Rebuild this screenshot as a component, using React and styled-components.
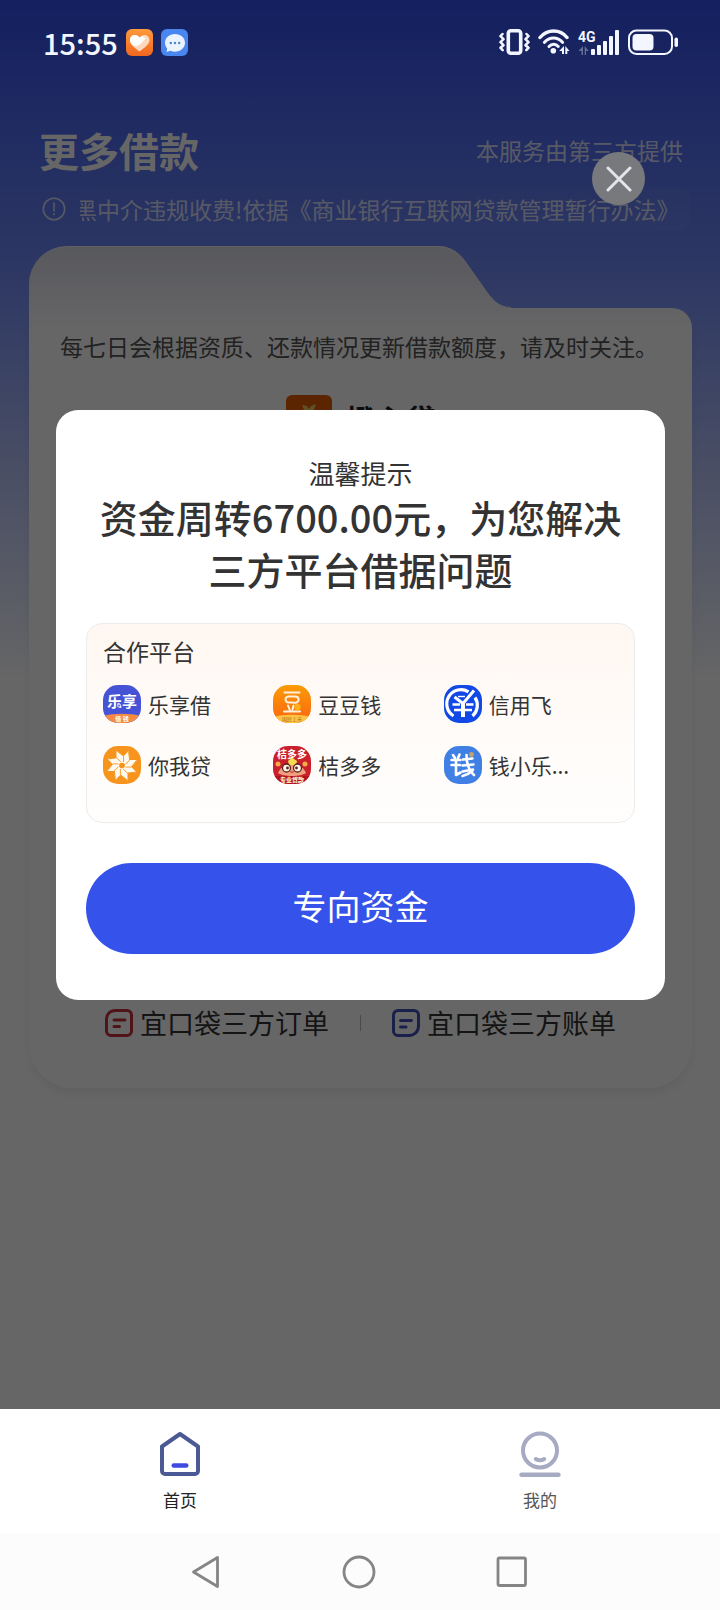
import React from 'react';
import styled, { createGlobalStyle } from 'styled-components';

const GlobalStyle = createGlobalStyle`
  * {
    box-sizing: border-box;
  }

  body {
    margin: 0;
    font-family: "Noto Sans CJK SC", "Noto Sans", sans-serif;
    color: #333333;
  }

  h1, h2, h3, p, ul {
    margin: 0;
    padding: 0;
    font-weight: 400;
  }

  a {
    color: inherit;
    text-decoration: none;
  }

  button {
    font-family: inherit;
    border: none;
    padding: 0;
    cursor: pointer;
  }

  svg {
    display: block;
    flex-shrink: 0;
  }
`;

const Page = styled.div`
  min-height: 100vh;
  display: flex;
  flex-direction: column;
`;

const Screen = styled.main`
  position: relative;
  flex: 1;
  background: linear-gradient(180deg, #3250f0 0, #728bf8 270px, #ffffff 680px);
`;

const StatusBar = styled.header`
  position: relative;
  z-index: 2;
  height: 84px;
  padding: 0 41px 0 43px;
  display: flex;
  align-items: center;
  justify-content: space-between;
  color: #f4f6ff;
`;

const StatusGroup = styled.div`
  display: flex;
  align-items: center;
  gap: 8px;
`;

const Clock = styled.span`
  font-size: 29px;
  line-height: 32px;
  font-weight: 500;
`;

const Heading = styled.div`
  padding: 38px 37px 0 39px;
  display: flex;
  align-items: center;
  justify-content: space-between;
  color: #ffffff;
`;

const PageTitle = styled.h1`
  font-size: 40px;
  line-height: 56px;
  font-weight: 700;
`;

const Provider = styled.p`
  font-size: 23px;
  line-height: 32px;
  color: rgba(255, 255, 255, 0.8);
`;

const Notice = styled.div`
  margin: 9px 30px 0 30px;
  padding: 0 11px 0 12px;
  height: 44px;
  display: flex;
  align-items: center;
  gap: 14px;
  border-radius: 12px;
  background: linear-gradient(90deg, rgba(255, 255, 255, 0), rgba(255, 255, 255, 0.04));
  color: rgba(255, 255, 255, 0.75);
`;

const NoticeText = styled.p`
  flex: 1;
  overflow: hidden;
  white-space: nowrap;
  font-size: 23px;
  line-height: 32px;
  text-indent: -6px;
`;

const Card = styled.section`
  margin: 15px 28px 0 29px;
`;

const CardTop = styled.div`
  display: flex;
`;

const CardTab = styled.div`
  flex: 9;
  height: 62px;
  border-top: 1px solid #f0f1f8;
  border-radius: 38px 0 0 0;
  background: linear-gradient(180deg, #dcdde8, #f6f6fc);
`;

const CardTabSpace = styled.div`
  flex: 4;
`;

const CardBody = styled.div`
  min-height: 780px;
  padding: 22px 31px 47px;
  display: flex;
  flex-direction: column;
  border-radius: 0 20px 44px 44px;
  background: linear-gradient(180deg, #f6f6fc 0, #ffffff 24px);
  box-shadow: 0 6px 10px rgba(0, 0, 0, 0.06);
`;

const CardHint = styled.p`
  font-size: 23px;
  line-height: 32px;
  white-space: nowrap;
  color: #555555;
`;

const Brand = styled.div`
  margin-top: 33px;
  display: flex;
  align-items: center;
  justify-content: center;
  gap: 14px;
`;

const BrandName = styled.h2`
  font-size: 30px;
  line-height: 44px;
  font-weight: 700;
  color: #222222;
`;

const CardLinks = styled.nav`
  margin-top: auto;
  display: flex;
  align-items: center;
  justify-content: center;
  gap: 31px;
`;

const CardLink = styled.a`
  display: flex;
  align-items: center;
  gap: 7px;
  font-size: 27px;
  line-height: 36px;
`;

const LinkDivider = styled.span`
  width: 1px;
  height: 16px;
  background-color: #bbbbbb;
`;

const Overlay = styled.div`
  position: absolute;
  inset: 0;
  z-index: 1;
  padding: 0 55px 0 56px;
  display: flex;
  align-items: center;
  justify-content: center;
  background-color: rgba(0, 0, 0, 0.6);
`;

const CloseButton = styled.button`
  position: absolute;
  top: 152px;
  right: 75px;
  width: 53px;
  height: 53px;
  display: flex;
  align-items: center;
  justify-content: center;
  border-radius: 50%;
  background-color: #78797d;
`;

const Dialog = styled.section`
  width: 100%;
  padding: 45px 30px 46px;
  border-radius: 22px;
  background-color: #ffffff;
`;

const DialogLabel = styled.p`
  font-size: 26px;
  line-height: 36px;
  text-align: center;
`;

const DialogTitle = styled.h2`
  font-size: 38px;
  line-height: 52px;
  font-weight: 500;
  text-align: center;
`;

const Partners = styled.div`
  margin-top: 28px;
  padding: 11px 20px 38px 16px;
  border: 1px solid #ececec;
  border-radius: 16px;
  background: linear-gradient(180deg, #fff7f1 0, #fffbf8 50%, #fffefd 100%);
`;

const PartnersTitle = styled.h3`
  font-size: 23px;
  line-height: 32px;
`;

const PartnerGrid = styled.ul`
  margin-top: 18px;
  display: grid;
  grid-template-columns: repeat(3, 1fr);
  row-gap: 23px;
  list-style: none;
`;

const Partner = styled.li`
  display: flex;
  align-items: center;
  gap: 7px;
  font-size: 21px;
  line-height: 38px;
`;

const PrimaryButton = styled.button`
  margin-top: 40px;
  width: 100%;
  height: 91px;
  padding-bottom: 6px;
  border-radius: 46px;
  background-color: #3552ea;
  color: #ffffff;
  font-size: 34px;
`;

const TabBar = styled.nav`
  height: 124px;
  padding-top: 22px;
  display: flex;
  background-color: #ffffff;
`;

const TabItem = styled.a`
  flex: 1;
  display: flex;
  flex-direction: column;
  align-items: center;
  gap: 11px;
  font-size: 17px;
  line-height: 24px;
  color: ${props => (props.$active ? '#222222' : '#555555')};
`;

const SystemBar = styled.footer`
  height: 77px;
  padding: 0 190px;
  display: flex;
  align-items: center;
  justify-content: space-between;
  background-color: #fcfcfc;
`;

const SystemButton = styled.button`
  background: none;
`;

const HeartAppIcon = () => (
  <svg width="27" height="27" viewBox="0 0 27 27">
    <defs>
      <linearGradient id="heartBg" x1="0" y1="0" x2="0" y2="1">
        <stop offset="0" stopColor="#ff9a3c" />
        <stop offset="1" stopColor="#f2661f" />
      </linearGradient>
    </defs>
    <rect width="27" height="27" rx="6" fill="url(#heartBg)" />
    <path d="M13.5 22.5C8 18.5 4 15 4 11c0-3 2-5 4.700-5 2 0 3.800 1 4.800 2.700C14.500 7 16.300 6 18.300 6 21 6 23.500 8 23.500 11c0 4-4.500 7.500-10 11.500z" fill="#ffd9bd" />
    <path d="M13.500 8.700C12.500 7 10.700 6 8.700 6 6 6 4 8 4 11c0 1.500.6 3 1.700 4.400 3 2.600 6.800 1.600 9.800-1.400l4-4.500c-2-2.500-4.500-2.500-6-.8z" fill="#ffffff" />
  </svg>
);

const ChatAppIcon = () => (
  <svg width="27" height="27" viewBox="0 0 27 27">
    <rect width="27" height="27" rx="6" fill="#4a86f0" />
    <path d="M14 5c5.600 0 10 3.800 10 8.800s-4.400 8.900-10 8.900c-1.700 0-3.300-.4-4.700-1L5.500 23l.7-3.600C4.800 17.900 4 16 4 13.800 4 8.800 8.400 5 14 5z" fill="#eaf3ff" />
    <circle cx="9.800" cy="14" r="1.200" fill="#4a86c8" />
    <circle cx="14" cy="14" r="1.200" fill="#4a86c8" />
    <circle cx="18.200" cy="14" r="1.200" fill="#4a86c8" />
  </svg>
);

const VibrateIcon = () => (
  <svg width="31" height="28" viewBox="0 0 31 28" fill="none" stroke="currentColor" strokeLinejoin="round" strokeLinecap="round">
    <rect x="9.300" y="2.800" width="12.400" height="22.400" rx="2.500" strokeWidth="3.600" />
    <path d="M3.500 6L1.500 8.200l3 3-3 3 3 3-3 2.600 2.200 2.400" strokeWidth="2.500" />
    <path d="M27.500 6l2 2.200-3 3 3 3-3 3 3 2.600-2.200 2.400" strokeWidth="2.500" />
  </svg>
);

const WifiIcon = () => (
  <svg width="32" height="28" viewBox="0 0 32 28" fill="none" stroke="currentColor" strokeLinecap="round">
    <path d="M2 9.500C9.500 .8 22 .8 29 9.500" strokeWidth="3.400" />
    <path d="M6.500 14.200c5-5.600 13-5.600 18 0" strokeWidth="3.200" />
    <path d="M11 18.600c2.700-3 6.700-3 9.300-.2" strokeWidth="3" />
    <circle cx="15.300" cy="22.800" r="2.800" fill="currentColor" stroke="none" />
    <path d="M26 18v8h-2v-3h-2.800zM27.300 18v8h2v-3h2.200z" fill="currentColor" stroke="none" />
  </svg>
);

const SignalIcon = () => (
  <svg width="42" height="28" viewBox="0 0 42 28" fill="currentColor">
    <text x="0" y="14" fontFamily="Roboto, sans-serif" fontSize="14" fontWeight="700">4G</text>
    <path d="M5 18v9H3.500v-4H.5zM6.700 18l4 5H8v4H6.700z" opacity="0.350" />
    <rect x="13" y="21" width="4" height="6" rx="1" />
    <rect x="19" y="17" width="4" height="10" rx="1" />
    <rect x="25" y="13" width="4" height="14" rx="1" />
    <rect x="31" y="8" width="4" height="19" rx="1" />
    <rect x="37" y="2" width="4" height="25" rx="1" />
  </svg>
);

const BatteryIcon = () => (
  <svg width="51" height="28" viewBox="0 0 51 28" fill="none">
    <rect x="1" y="2.500" width="43" height="23.500" rx="7.500" stroke="currentColor" strokeWidth="2" />
    <rect x="4.500" y="6" width="21" height="16.500" rx="4" fill="currentColor" />
    <rect x="46.500" y="9.500" width="3.500" height="9.500" rx="1.700" fill="currentColor" />
  </svg>
);

const AlertIcon = () => (
  <svg width="24" height="24" viewBox="0 0 24 24" fill="none" stroke="currentColor">
    <circle cx="12" cy="12" r="10.700" strokeWidth="1.600" />
    <path d="M12 6v8" strokeWidth="1.600" strokeLinecap="round" />
    <circle cx="12" cy="17.300" r="1" fill="currentColor" stroke="none" />
  </svg>
);

const CardSlope = () => (
  <svg width="74" height="62" viewBox="0 0 74 62">
    <defs>
      <linearGradient id="slopeBg" x1="0" y1="0" x2="0" y2="1">
        <stop offset="0" stopColor="#dcdde8" />
        <stop offset="1" stopColor="#f6f6fc" />
      </linearGradient>
    </defs>
    <path d="M0 0C12 0 21 5 28 15L50 46C57 56 64 62 74 62H0z" fill="url(#slopeBg)" />
    <path d="M0 .5C12 .5 21 5.500 28 15.500L50 46.500C57 56 64 61.500 74 61.500" fill="none" stroke="#f0f1f8" strokeWidth="1" />
  </svg>
);

const BrandIcon = () => (
  <svg width="46" height="46" viewBox="0 0 46 46">
    <rect width="46" height="46" rx="6" fill="#e25c00" />
    <circle cx="23" cy="29" r="13" fill="#ffb84d" />
    <path d="M16 10l5 1 2 3 2-3 5-2-2 6H18z" fill="#f0c860" />
  </svg>
);

const OrderIcon = () => (
  <svg width="28" height="28" viewBox="0 0 28 28" fill="none" stroke="#c8303a" strokeWidth="3" strokeLinecap="round">
    <path d="M10.500 1.500H22a4.500 4.500 0 0 1 4.500 4.500v16a4.500 4.500 0 0 1-4.500 4.500H6A4.500 4.500 0 0 1 1.500 22V11C1.500 5 5 1.500 10.500 1.500z" strokeLinejoin="round" />
    <path d="M9 11h11M9 17.500h5.500" />
  </svg>
);

const BillIcon = () => (
  <svg width="28" height="28" viewBox="0 0 28 28" fill="none" stroke="#4350b8" strokeWidth="3" strokeLinecap="round">
    <path d="M6 1.500h16A4.500 4.500 0 0 1 26.500 6v11c0 5.500-4 9.500-9.500 9.500H6A4.500 4.500 0 0 1 1.500 22V6A4.500 4.500 0 0 1 6 1.500z" strokeLinejoin="round" />
    <path d="M8.500 11.500h11M8.500 18H14" />
  </svg>
);

const CloseIcon = () => (
  <svg width="26" height="26" viewBox="0 0 26 26" fill="none" stroke="#e4e5ea" strokeWidth="3" strokeLinecap="round">
    <path d="M2 2l22 22M24 2L2 24" />
  </svg>
);

const LexiangLogo = () => (
  <svg width="38" height="38" viewBox="0 0 38 38">
    <defs>
      <clipPath id="lexiangClip">
        <rect width="38" height="38" rx="15" />
      </clipPath>
    </defs>
    <g clipPath="url(#lexiangClip)">
      <rect width="38" height="38" fill="#4653d6" />
      <path d="M0 31c10-3 28-3 38 0V38H0z" fill="#f58a45" />
      <text x="19" y="22" fontSize="15" fontWeight="700" fill="#ffffff" textAnchor="middle">乐享</text>
      <circle cx="16" cy="20.500" r="1.600" fill="#5c6fe8" stroke="#ffffff" strokeWidth="0.800" />
      <text x="19" y="35.500" fontSize="6" fontWeight="700" fill="#ffffff" textAnchor="middle">借 钱</text>
    </g>
  </svg>
);

const DoudouLogo = () => (
  <svg width="38" height="38" viewBox="0 0 38 38">
    <defs>
      <linearGradient id="doudouBg" x1="0" y1="0" x2="0" y2="1">
        <stop offset="0" stopColor="#fb9b08" />
        <stop offset="1" stopColor="#fb6410" />
      </linearGradient>
      <clipPath id="doudouClip">
        <rect width="38" height="38" rx="15" />
      </clipPath>
    </defs>
    <g clipPath="url(#doudouClip)">
      <rect width="38" height="38" fill="url(#doudouBg)" />
      <path d="M0 32c10-3 28-3 38 0v6H0z" fill="#fcc445" />
      <g fill="none" stroke="#fff2dc" strokeWidth="2" strokeLinecap="round">
        <path d="M11.500 7.500h15" />
        <path d="M15.500 11.500h6.500c4.500 0 4.500 4.500 1.500 6-2.500 1-5-.5-7 0-4.500.5-5.500-5.500-1-6z" />
        <path d="M15 20.500l2 5M11 26.500h16M20.500 20.500l-1 4" />
      </g>
      <circle cx="24.500" cy="22" r="3.200" fill="#fbb01c" />
      <text x="19" y="35.800" fontSize="5" fill="#b06a10" textAnchor="middle">国民上市</text>
    </g>
  </svg>
);

const XinyongLogo = () => (
  <svg width="38" height="38" viewBox="0 0 38 38">
    <rect width="38" height="38" rx="15" fill="#1248e6" />
    <g fill="none" stroke="#ffffff">
      <path d="M24.500 6.800A14.200 14.200 0 0 0 9.500 31" strokeWidth="3.200" />
      <path d="M31 12.500A14.200 14.200 0 0 1 28.500 31" strokeWidth="3.200" />
      <path d="M10.500 12l8.500 6.500L30 5.500" strokeWidth="3" />
      <path d="M8.500 19.500h7.500M22 19.500h7.500M10 25h18" strokeWidth="2.600" />
      <path d="M19 18v14" strokeWidth="4" />
      <path d="M14 11.500h7" strokeWidth="1.400" />
    </g>
  </svg>
);

const PETALS = [0, 45, 90, 135, 180, 225, 270, 315];

const NiwoLogo = () => (
  <svg width="38" height="38" viewBox="0 0 38 38">
    <rect width="38" height="38" rx="15" fill="#f7941d" />
    {PETALS.map((angle) => (
      <path
        key={angle}
        d="M19 17.500L13.500 12.500V4.500L20.800 10.200V16.500z"
        fill="#fffaf0"
        transform={`rotate(${angle} 19 19.500)`}
      />
    ))}
    {PETALS.map((angle) => (
      <path
        key={angle}
        d="M13.800 5L20.600 10.300V16"
        fill="none"
        stroke="#f7941d"
        strokeWidth="0.900"
        transform={`rotate(${angle} 19 19.500)`}
      />
    ))}
    <circle cx="19" cy="19.500" r="2.800" fill="#f7941d" />
  </svg>
);

const JieduoLogo = () => (
  <svg width="38" height="38" viewBox="0 0 38 38">
    <defs>
      <clipPath id="jieduoClip">
        <rect width="38" height="38" rx="15" />
      </clipPath>
    </defs>
    <g clipPath="url(#jieduoClip)">
      <rect width="38" height="38" fill="#c9202c" />
      <rect y="30" width="38" height="8" fill="#b0121e" />
      <path d="M15 15l4-3.500 5 3.500-1 4h-7z" fill="#f3dc4e" />
      <circle cx="5" cy="18" r="2.500" fill="#f5a94a" />
      <circle cx="32" cy="18" r="2.500" fill="#f5a94a" />
      <path d="M5 27c2-5 6-8 14-8s12 3 14 8c-5 4-23 4-28 0z" fill="#f0a080" />
      <circle cx="13.500" cy="22" r="4" fill="#fff6ee" stroke="#5a2418" strokeWidth="1.300" />
      <circle cx="24.500" cy="22" r="4" fill="#fff6ee" stroke="#5a2418" strokeWidth="1.300" />
      <circle cx="14.500" cy="22" r="1.400" fill="#5a2418" />
      <circle cx="23.500" cy="22" r="1.400" fill="#5a2418" />
      <path d="M17 25.500c1 1 3 1 4 0" stroke="#c9202c" strokeWidth="1" fill="none" />
      <text x="19" y="12" fontSize="10" fontWeight="700" fill="#ffffff" textAnchor="middle">桔多多</text>
      <text x="19" y="35.500" fontSize="6" fontWeight="900" fill="#ffe9c8" textAnchor="middle">专业贷款</text>
    </g>
  </svg>
);

const QianxiaoLogo = () => (
  <svg width="38" height="38" viewBox="0 0 38 38">
    <rect width="38" height="38" rx="15" fill="#4080e4" />
    <g fill="none" stroke="#ffffff" strokeWidth="2.600" strokeLinecap="round" strokeLinejoin="round">
      <path d="M9 9l2 3M15.500 8.500L14 12M7.500 14h9M7.500 19h8.500M12 14v15l4.500-2.500" />
      <path d="M19 13.500l9.500-1M18.500 19.500l11-1M18.500 25.500l10.500-2" />
      <path d="M22.500 9c0 8 2 15 7.500 20M28.500 24.500c-3 3-6 4.500-10 5.500" />
    </g>
    <circle cx="27.500" cy="8.500" r="2.400" fill="#c9a268" />
  </svg>
);

const HomeIcon = () => (
  <svg width="42" height="46" viewBox="0 0 42 46" fill="none">
    <path d="M21 3L39 15.500V40a3 3 0 0 1-3 3H6a3 3 0 0 1-3-3V15.500z" stroke="#4b5a94" strokeWidth="4" strokeLinejoin="round" />
    <path d="M14.800 34.500h12.400" stroke="#3f4be0" strokeWidth="4.600" strokeLinecap="round" />
  </svg>
);

const MineIcon = () => (
  <svg width="42" height="46" viewBox="0 0 42 46" fill="none" stroke="#a6aac2" strokeLinecap="round">
    <circle cx="21" cy="19.500" r="17" strokeWidth="4" />
    <path d="M16.800 28c2.500 1.600 5.900 1.600 8.400 0" strokeWidth="4" />
    <path d="M2.500 43.800h37" strokeWidth="4.400" />
  </svg>
);

const partners = [
  { name: '乐享借', Logo: LexiangLogo },
  { name: '豆豆钱', Logo: DoudouLogo },
  { name: '信用飞', Logo: XinyongLogo },
  { name: '你我贷', Logo: NiwoLogo },
  { name: '桔多多', Logo: JieduoLogo },
  { name: '钱小乐...', Logo: QianxiaoLogo },
];

const App = () => {
  const [dialogOpen, setDialogOpen] = React.useState(true);
  const [activeTab, setActiveTab] = React.useState('home');

  return (
    <Page>
      <GlobalStyle />
      <Screen>
        <StatusBar>
          <StatusGroup>
            <Clock>15:55</Clock>
            <HeartAppIcon />
            <ChatAppIcon />
          </StatusGroup>
          <StatusGroup>
            <VibrateIcon />
            <WifiIcon />
            <SignalIcon />
            <BatteryIcon />
          </StatusGroup>
        </StatusBar>
        <Heading>
          <PageTitle>更多借款</PageTitle>
          <Provider>本服务由第三方提供</Provider>
        </Heading>
        <Notice>
          <AlertIcon />
          <NoticeText>黑中介违规收费!依据《商业银行互联网贷款管理暂行办法》等</NoticeText>
        </Notice>
        <Card>
          <CardTop>
            <CardTab />
            <CardSlope />
            <CardTabSpace />
          </CardTop>
          <CardBody>
            <CardHint>每七日会根据资质、还款情况更新借款额度，请及时关注。</CardHint>
            <Brand>
              <BrandIcon />
              <BrandName>橙心贷</BrandName>
            </Brand>
            <CardLinks>
              <CardLink href="#orders">
                <OrderIcon />
                宜口袋三方订单
              </CardLink>
              <LinkDivider />
              <CardLink href="#bills">
                <BillIcon />
                宜口袋三方账单
              </CardLink>
            </CardLinks>
          </CardBody>
        </Card>
        {dialogOpen && (
          <Overlay>
            <CloseButton aria-label="关闭" onClick={() => setDialogOpen(false)}>
              <CloseIcon />
            </CloseButton>
            <Dialog role="dialog" aria-labelledby="dialog-title">
              <DialogLabel>温馨提示</DialogLabel>
              <DialogTitle id="dialog-title">资金周转6700.00元，为您解决三方平台借据问题</DialogTitle>
              <Partners>
                <PartnersTitle>合作平台</PartnersTitle>
                <PartnerGrid>
                  {partners.map(({ name, Logo }) => (
                    <Partner key={name}>
                      <Logo />
                      {name}
                    </Partner>
                  ))}
                </PartnerGrid>
              </Partners>
              <PrimaryButton>专向资金</PrimaryButton>
            </Dialog>
          </Overlay>
        )}
      </Screen>
      <TabBar>
        <TabItem href="#home" $active={activeTab === 'home'} onClick={() => setActiveTab('home')}>
          <HomeIcon />
          首页
        </TabItem>
        <TabItem href="#mine" $active={activeTab === 'mine'} onClick={() => setActiveTab('mine')}>
          <MineIcon />
          我的
        </TabItem>
      </TabBar>
      <SystemBar>
        <SystemButton aria-label="返回">
          <svg width="32" height="36" viewBox="0 0 32 36" fill="none" stroke="#858585" strokeWidth="2.800" strokeLinejoin="round">
            <path d="M27.500 3.500v29L3.500 18z" />
          </svg>
        </SystemButton>
        <SystemButton aria-label="主屏幕">
          <svg width="36" height="36" viewBox="0 0 36 36" fill="none" stroke="#858585" strokeWidth="2.800">
            <circle cx="19" cy="18" r="15" />
          </svg>
        </SystemButton>
        <SystemButton aria-label="最近任务">
          <svg width="36" height="36" viewBox="0 0 36 36" fill="none" stroke="#858585" strokeWidth="2.800">
            <rect x="4" y="4" width="27.500" height="27.500" rx="1.500" />
          </svg>
        </SystemButton>
      </SystemBar>
    </Page>
  );
};

export default App;
